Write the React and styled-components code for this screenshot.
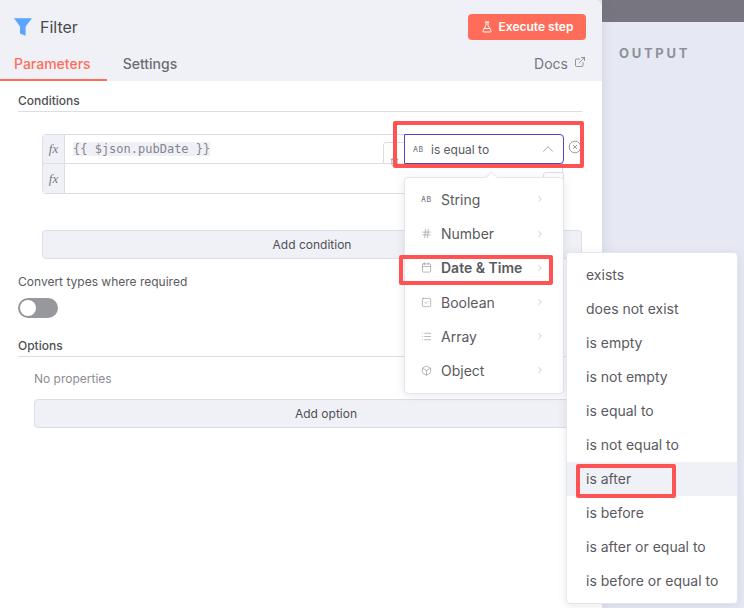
import styled, { createGlobalStyle } from "styled-components";
import { FlaskConical, ExternalLink, ChevronRight, ChevronUp, Hash, Calendar, SquareCheck, List, Box, CircleX, Trash2 } from "lucide-react";

const Global = createGlobalStyle`
  html, body { margin: 0; padding: 0; }
  body { font-family: Inter, "Liberation Sans", sans-serif; color: #555; }
`;

const Page = styled.div`
  position: relative;
  width: 744px;
  height: 608px;
  overflow: hidden;
  display: flex;
  background: #e6e9f3;
`;

const Panel = styled.div`
  width: 602px;
  height: 608px;
  background: #fff;
  border-top-right-radius: 8px;
  box-shadow: 0 0 12px rgba(100, 100, 130, 0.18);
  z-index: 1;
`;

const Head = styled.div`
  height: 81px;
  background: #f0f1f6;
  border-top-right-radius: 8px;
  display: flex;
  flex-direction: column;
`;

const TitleRow = styled.div`
  display: flex;
  align-items: center;
  height: 56px;
  padding: 0 16px 0 14px;
`;

const Title = styled.div`
  font-size: 16px;
  color: #4a4a50;
  margin-left: 8px;
  flex: 1;
  position: relative;
  top: -1px;
`;

const Execute = styled.div`
  width: 118px;
  height: 26px;
  margin-top: -3px;
  border-radius: 4px;
  background: #ff6d5a;
  color: #fff;
  font-size: 12px;
  font-weight: 600;
  display: flex;
  align-items: center;
  justify-content: center;
  gap: 6px;
`;

const Tabs = styled.div`
  display: flex;
  height: 25px;
  align-items: flex-start;
  padding-right: 16px;
`;

const Tab = styled.div`
  height: 25px;
  box-sizing: border-box;
  padding: 0 16px 0 14px;
  margin-right: ${(p) => (p.$active ? "1px" : "0")};
  font-size: 14px;
  line-height: 15px;
  font-weight: 500;
  color: ${(p) => (p.$active ? "#ff6d5a" : "#6c6c74")};
  border-bottom: ${(p) => (p.$active ? "2px solid #ff6d5a" : "none")};
`;

const SettingsTab = styled(Tab)`
  padding-left: 15px;
`;

const Docs = styled.div`
  margin-left: auto;
  display: flex;
  gap: 6px;
  font-size: 14px;
  line-height: 15px;
  color: #77777e;
`;

const Body = styled.div`
  padding: 12px 20px 0 18px;
  display: flex;
  flex-direction: column;
`;

const SectionTitle = styled.div`
  font-size: 12px;
  font-weight: 500;
  line-height: 15px;
  color: #4f4f55;
  padding-bottom: 3px;
  border-bottom: 1px solid #dbdde8;
`;

const Conditions = styled.div`
  margin: 22px 0 0 24px;
  width: 521px;
  height: 60px;
  box-sizing: border-box;
  border: 1px solid #dbdde8;
  border-radius: 4px;
  display: grid;
  grid-template-rows: 28px 1fr;
`;

const ConditionRow = styled.div`
  display: flex;
  align-items: center;
  & + & { border-top: 1px solid #dbdde8; }
`;

const Fx = styled.div`
  width: 21px;
  align-self: stretch;
  background: #f0f1f6;
  border-right: 1px solid #dbdde8;
  display: flex;
  align-items: center;
  justify-content: center;
  font-family: "Liberation Serif", serif;
  font-style: italic;
  font-size: 13px;
  color: #77777e;
`;

const Code = styled.span`
  margin-left: 8px;
  background: #f0f1f6;
  font-family: "DejaVu Sans Mono", "Liberation Mono", monospace;
  font-size: 12px;
  line-height: 14px;
  color: #85858d;
`;

const WideButton = styled.div`
  margin: ${(p) => p.$margin};
  padding-left: ${(p) => p.$inset || "0"};
  height: 29px;
  box-sizing: border-box;
  border: 1px solid #dbdde8;
  border-radius: 4px;
  background: #f0f1f6;
  display: flex;
  align-items: center;
  justify-content: center;
  font-size: 12px;
  font-weight: 400;
  color: #4f4f55;
`;

const Label = styled.div`
  margin-top: 15px;
  font-size: 12px;
  line-height: 15px;
  color: #5a5a60;
`;

const Toggle = styled.div`
  margin: 9px 0 20px;
  width: 40px;
  height: 20px;
  border-radius: 10px;
  background: #97979e;
  position: relative;
  &::after {
    content: "";
    position: absolute;
    left: 2px;
    top: 2px;
    width: 16px;
    height: 16px;
    border-radius: 50%;
    background: #fff;
  }
`;

const Empty = styled.div`
  margin: 14px 0 0 16px;
  font-size: 12px;
  line-height: 15px;
  color: #8d8d94;
`;

const Side = styled.div`
  flex: 1;
  display: flex;
  flex-direction: column;
`;

const TopBar = styled.div`
  height: 22px;
  background: #77757f;
`;

const Output = styled.div`
  margin: 23px 0 0 17px;
  font-size: 13px;
  font-weight: 700;
  letter-spacing: 2.7px;
  color: #8f9098;
`;

const Select = styled.div`
  position: absolute;
  z-index: 2;
  left: 404px;
  top: 134px;
  width: 160px;
  height: 30px;
  box-sizing: border-box;
  background: #fff;
  border: 1px solid #5545c0;
  border-radius: 0 4px 4px 0;
  display: flex;
  align-items: center;
  padding: 0 6px 0 8px;
  font-size: 12px;
  color: #5a5a60;
`;

const TypeBadge = styled.span`
  font-size: 7px;
  font-weight: 500;
  letter-spacing: 0.5px;
  color: #77777e;
  width: ${(p) => p.$width};
  flex: none;
`;

const Menu = styled.div`
  position: absolute;
  z-index: 3;
  left: ${(p) => p.$left}px;
  top: ${(p) => p.$top}px;
  width: ${(p) => p.$width}px;
  box-sizing: border-box;
  padding: ${(p) => p.$padding};
  background: #fff;
  border: 1px solid #e4e6ef;
  border-radius: 4px;
  box-shadow: 0 2px 10px rgba(80, 80, 110, 0.12);
`;

const Arrow = styled.div`
  position: absolute;
  left: 82px;
  top: -5px;
  width: 8px;
  height: 8px;
  background: #fff;
  border-left: 1px solid #e4e6ef;
  border-top: 1px solid #e4e6ef;
  transform: rotate(45deg);
`;

const TypeItem = styled.div`
  height: 34.2px;
  display: flex;
  align-items: center;
  padding: 0 18px 0 16px;
  font-size: 14px;
  font-weight: ${(p) => (p.$bold ? 600 : 400)};
  color: #5a5a60;
`;

const ItemIcon = styled.span`
  width: 20px;
  flex: none;
  display: flex;
  align-items: center;
  color: #85858c;
`;

const ItemText = styled.span`
  flex: 1;
`;

const OptionItem = styled.div`
  height: 34px;
  box-sizing: border-box;
  display: flex;
  align-items: center;
  padding: 0 0 2px 19px;
  font-size: 14px;
  color: #5a5a60;
  background: ${(p) => (p.$hover ? "#f0f1f6" : "transparent")};
`;

const Mark = styled.div`
  position: absolute;
  z-index: 4;
  left: ${(p) => p.$left}px;
  top: ${(p) => p.$top}px;
  width: ${(p) => p.$width}px;
  height: ${(p) => p.$height}px;
  box-sizing: border-box;
  border: 4px solid #ff5252;
  border-radius: 2px;
`;

const RemoveIcon = styled.div`
  position: absolute;
  z-index: 2;
  left: 568px;
  top: 140px;
  display: flex;
  color: #77777e;
`;

const TrashTab = styled.div`
  position: absolute;
  z-index: 1;
  left: 383px;
  top: 142px;
  width: 24px;
  height: 22px;
  box-sizing: border-box;
  background: #fff;
  border: 1px solid #dbdde8;
  border-radius: 3px 3px 0 0;
  padding: 7px 0 0 6px;
  color: #8d8d94;
`;

const ExprTab = styled.div`
  position: absolute;
  z-index: 1;
  left: 543px;
  top: 172px;
  width: 21px;
  height: 22px;
  box-sizing: border-box;
  background: #fff;
  border: 1px solid #dbdde8;
  border-radius: 3px 3px 0 0;
`;

const Funnel = styled.svg`
  flex: none;
  margin-top: -3px;
`;

const FunnelIcon = () => (
  <Funnel width="18" height="18" viewBox="0 0 18 18">
    <path d="M0 0.3h18L11.6 8.6v9.1L6 15.4V8.6z" fill="#5aa5ff" />
  </Funnel>
);

const types = [
  { name: "String", badge: true },
  { name: "Number", icon: Hash },
  { name: "Date & Time", icon: Calendar, bold: true },
  { name: "Boolean", icon: SquareCheck },
  { name: "Array", icon: List },
  { name: "Object", icon: Box },
];

const options = [
  "exists",
  "does not exist",
  "is empty",
  "is not empty",
  "is equal to",
  "is not equal to",
  "is after",
  "is before",
  "is after or equal to",
  "is before or equal to",
];

export default function App() {
  return (
    <Page>
      <Global />
      <Panel>
        <Head>
          <TitleRow>
            <FunnelIcon />
            <Title>Filter</Title>
            <Execute>
              <FlaskConical size={12} />
              Execute step
            </Execute>
          </TitleRow>
          <Tabs>
            <Tab $active>Parameters</Tab>
            <SettingsTab>Settings</SettingsTab>
            <Docs>
              Docs
              <ExternalLink size={12} strokeWidth={1.5} />
            </Docs>
          </Tabs>
        </Head>
        <Body>
          <SectionTitle>Conditions</SectionTitle>
          <Conditions>
            <ConditionRow>
              <Fx>fx</Fx>
              <Code>{"{{ $json.pubDate }}"}</Code>
            </ConditionRow>
            <ConditionRow>
              <Fx>fx</Fx>
            </ConditionRow>
          </Conditions>
          <WideButton $margin="36px 0 0 24px">Add condition</WideButton>
          <Label>Convert types where required</Label>
          <Toggle />
          <SectionTitle>Options</SectionTitle>
          <Empty>No properties</Empty>
          <WideButton $margin="13px 8px 0 16px" $inset="44px">Add option</WideButton>
        </Body>
      </Panel>
      <Side>
        <TopBar />
        <Output>OUTPUT</Output>
      </Side>

      <TrashTab>
        <Trash2 size={9} />
      </TrashTab>
      <ExprTab />
      <Select>
        <TypeBadge $width="18px">AB</TypeBadge>
        <ItemText>is equal to</ItemText>
        <ChevronUp size={18} strokeWidth={1} color="#85858c" />
      </Select>
      <RemoveIcon>
        <CircleX size={14} strokeWidth={1.25} />
      </RemoveIcon>

      <Menu $left={404} $top={177} $width={160} $padding="4.4px 0 5.6px">
        <Arrow />
        {types.map((t) => (
          <TypeItem key={t.name} $bold={t.bold}>
            <ItemIcon>
              {t.badge ? <TypeBadge $width="20px">AB</TypeBadge> : <t.icon size={11} strokeWidth={1.25} />}
            </ItemIcon>
            <ItemText>{t.name}</ItemText>
            <ChevronRight size={10} strokeWidth={1.25} color="#9a9aa2" />
          </TypeItem>
        ))}
      </Menu>

      <Menu $left={566} $top={252} $width={172} $padding="5px 0">
        {options.map((o) => (
          <OptionItem key={o} $hover={o === "is after"}>
            {o}
          </OptionItem>
        ))}
      </Menu>

      <Mark $left={393} $top={121} $width={191} $height={47} />
      <Mark $left={399} $top={255} $width={154} $height={30} />
      <Mark $left={576} $top={464} $width={100} $height={34} />
    </Page>
  );
}
